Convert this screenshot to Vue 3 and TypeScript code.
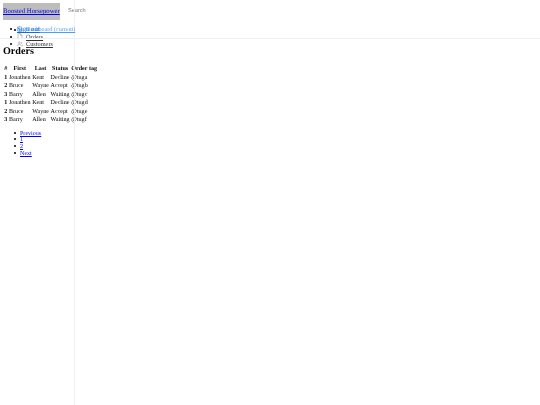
<script setup lang="ts">
const nav = [
  { label: 'Orders', icon: 'file' },
  { label: 'Customers', icon: 'users' },
]
const rows = [
  ['1', 'Jonathen', 'Kent', 'Decline', '@tuga'],
  ['2', 'Bruce', 'Wayne', 'Accept', '@tugb'],
  ['3', 'Barry', 'Allen', 'Waiting', '@tugc'],
  ['1', 'Jonathen', 'Kent', 'Decline', '@tugd'],
  ['2', 'Bruce', 'Wayne', 'Accept', '@tuge'],
  ['3', 'Barry', 'Allen', 'Waiting', '@tugf'],
]
const pages = ['Previous', '1', '2', 'Next']
</script>

<template>
  <div class="page">
    <header class="top">
      <a class="brand" href="#">Boosted Horsepower</a>
      <span class="search">Search</span>
    </header>
    <ul class="nav">
      <li class="current">
        <svg class="icon" viewBox="0 0 24 24" fill="none" stroke="#2f8df0" stroke-width="2">
          <path d="M3 9l9-7 9 7v11a2 2 0 0 1-2 2H5a2 2 0 0 1-2-2z" />
          <path d="M9 22V12h6v10" />
        </svg>
        <a class="dash" href="#">Dashboard (current)</a>
        <span class="signout"><a href="#">Sign out</a></span>
      </li>
      <li v-for="item in nav" :key="item.label">
        <svg class="icon" viewBox="0 0 24 24" fill="none" stroke="#8a8a8a" stroke-width="2">
          <template v-if="item.icon === 'file'">
            <path d="M13 2H6a2 2 0 0 0-2 2v16a2 2 0 0 0 2 2h12a2 2 0 0 0 2-2V9z" />
            <path d="M13 2v7h7" />
          </template>
          <template v-else>
            <path d="M17 21v-2a4 4 0 0 0-4-4H5a4 4 0 0 0-4 4v2" />
            <circle cx="9" cy="7" r="4" />
            <path d="M23 21v-2a4 4 0 0 0-3-3.9M16 3.1a4 4 0 0 1 0 7.8" />
          </template>
        </svg>
        <a class="link" href="#">{{ item.label }}</a>
      </li>
    </ul>
    <h2 class="title">Orders</h2>
    <table class="orders">
      <thead>
        <tr>
          <th>#</th>
          <th>First</th>
          <th>Last</th>
          <th>Status</th>
          <th>Order tag</th>
        </tr>
      </thead>
      <tbody>
        <tr v-for="(row, i) in rows" :key="i">
          <td class="num">{{ row[0] }}</td>
          <td>{{ row[1] }}</td>
          <td>{{ row[2] }}</td>
          <td>{{ row[3] }}</td>
          <td>{{ row[4] }}</td>
        </tr>
      </tbody>
    </table>
    <ul class="pager">
      <li v-for="p in pages" :key="p">
        <a href="#">{{ p }}</a>
      </li>
    </ul>
  </div>
</template>

<style>
html,
body {
  margin: 0;
  background: #fff;
}
</style>

<style scoped>
.page {
  position: relative;
  width: 540px;
  height: 405px;
  overflow: hidden;
  font-family: "Liberation Serif", serif;
  font-size: 6.75px;
  line-height: 7.6px;
  color: #000;
  text-rendering: geometricPrecision;
  filter: blur(0.35px);
}
.page::before {
  content: "";
  position: absolute;
  left: 74px;
  top: 0;
  bottom: 0;
  width: 1px;
  background: #f0f0f2;
}
.page::after {
  content: "";
  position: absolute;
  left: 0;
  right: 0;
  top: 38px;
  height: 1px;
  background: #f0f0f2;
}
.top {
  display: flex;
  align-items: center;
  height: 23px;
}
.brand {
  margin-left: 3px;
  width: 57px;
  height: 17px;
  line-height: 17px;
  background: #bdbdbd;
  color: #0000ee;
  white-space: nowrap;
}
.search {
  margin: 1px 0 0 8px;
  font-family: "Liberation Sans", sans-serif;
  font-size: 5.6px;
  color: #7a7a7a;
}
.nav {
  margin: 3px 0 0;
  padding: 0 0 0 17px;
  list-style: none;
}
.nav li {
  position: relative;
  height: 7.4px;
  white-space: nowrap;
}
.nav li::before {
  content: "";
  display: inline-block;
  width: 2px;
  height: 2px;
  margin-left: -7px;
  margin-right: 5px;
  border-radius: 50%;
  background: #000;
  vertical-align: 1px;
}
.dash {
  margin-left: 3px;
  color: #4a9ff2;
  font-size: 6.1px;
}
.signout {
  position: absolute;
  left: 0;
  top: 0;
}
.signout a {
  color: #0d6fd8;
}
.signout::before {
  content: "";
  position: absolute;
  left: -3px;
  top: 3px;
  width: 2px;
  height: 2px;
  border-radius: 50%;
  background: #000;
}
.icon {
  width: 6px;
  height: 6px;
  vertical-align: -0.8px;
}
.link {
  margin-left: 3px;
  font-size: 6.3px;
  color: #333;
}
.title {
  margin: -2px 0 0 3px;
  font-size: 10.1px;
  line-height: 11.5px;
  font-weight: bold;
}
.orders {
  margin: 8px 0 0 3.4px;
  border-collapse: collapse;
  font-size: 6.07px;
  line-height: 7px;
}
.orders th,
.orders td {
  padding: 0.75px 0.85px;
  white-space: nowrap;
}
.num {
  font-weight: bold;
  text-align: center;
}
.pager {
  margin: 5.5px 0 0;
  padding: 0 0 0 20px;
  list-style: none;
  font-size: 6.07px;
}
.pager li {
  height: 6.75px;
  line-height: 6.75px;
}
.pager li::before {
  content: "";
  display: inline-block;
  width: 2px;
  height: 2px;
  margin-left: -6px;
  margin-right: 4px;
  border-radius: 50%;
  background: #000;
  vertical-align: 1px;
}
.pager a {
  color: #0000ee;
}
</style>
